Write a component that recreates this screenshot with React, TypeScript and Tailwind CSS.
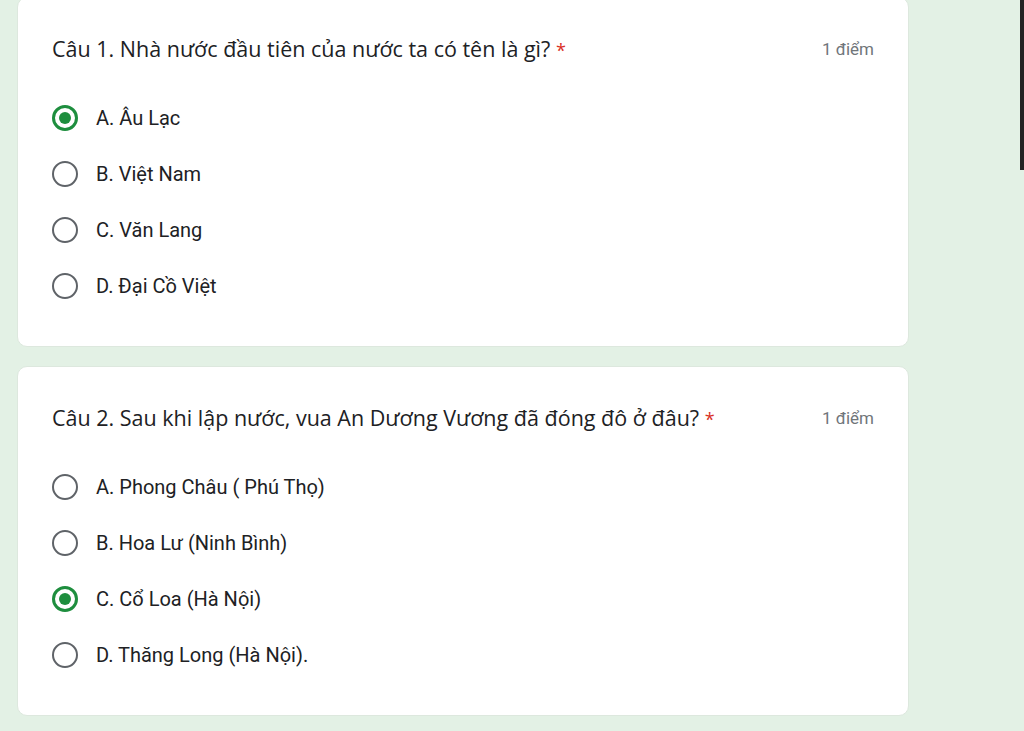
const QUESTIONS = [
  {
    title: "Câu 1. Nhà nước đầu tiên của nước ta có tên là gì?",
    options: ["A. Âu Lạc", "B. Việt Nam", "C. Văn Lang", "D. Đại Cồ Việt"],
    selected: 0,
  },
  {
    title: "Câu 2. Sau khi lập nước, vua An Dương Vương đã đóng đô ở đâu?",
    options: [
      "A. Phong Châu ( Phú Thọ)",
      "B. Hoa Lư (Ninh Bình)",
      "C. Cổ Loa (Hà Nội)",
      "D. Thăng Long (Hà Nội).",
    ],
    selected: 2,
  },
];

function Radio({ checked }: { checked: boolean }) {
  return checked ? (
    <span className="flex h-[26px] w-[26px] items-center justify-center rounded-full border-[3px] border-[#1e8e3e]">
      <span className="h-[12px] w-[12px] rounded-full bg-[#1e8e3e]" />
    </span>
  ) : (
    <span className="h-[26px] w-[26px] rounded-full border-[2.5px] border-[#5f6368]" />
  );
}

export default function App() {
  return (
    <div
      className="relative h-[731px] overflow-hidden bg-[#e3f1e5] pl-[17px]"
      style={{ fontFamily: "Roboto, 'Noto Sans', sans-serif" }}
    >
      <div className="-mt-[3px] flex w-[892px] flex-col gap-[19px]">
        {QUESTIONS.map((q, qi) => (
          <div
            key={qi}
            className="h-[350px] rounded-[10px] border border-[#dde8de] bg-white pl-[34px] pr-[34px] pt-[37px]"
          >
            <div className="flex items-center justify-between">
              <p className="font-['Open_Sans',sans-serif] text-[21.5px] leading-[28px] text-[#202124]">
                {q.title} <span className="text-[18px] text-[#d93025]">*</span>
              </p>
              <span className="text-[17px] text-[#70757a]">1 điểm</span>
            </div>
            <div className="mt-[26px] flex flex-col">
              {q.options.map((o, oi) => (
                <label key={oi} className="flex h-[56px] items-center gap-[18px]">
                  <Radio checked={oi === q.selected} />
                  <span className="text-[20px] text-[#202124]">{o}</span>
                </label>
              ))}
            </div>
          </div>
        ))}
      </div>
      <div className="absolute right-0 top-0 h-[170px] w-[4px] bg-[#222]" />
    </div>
  );
}
